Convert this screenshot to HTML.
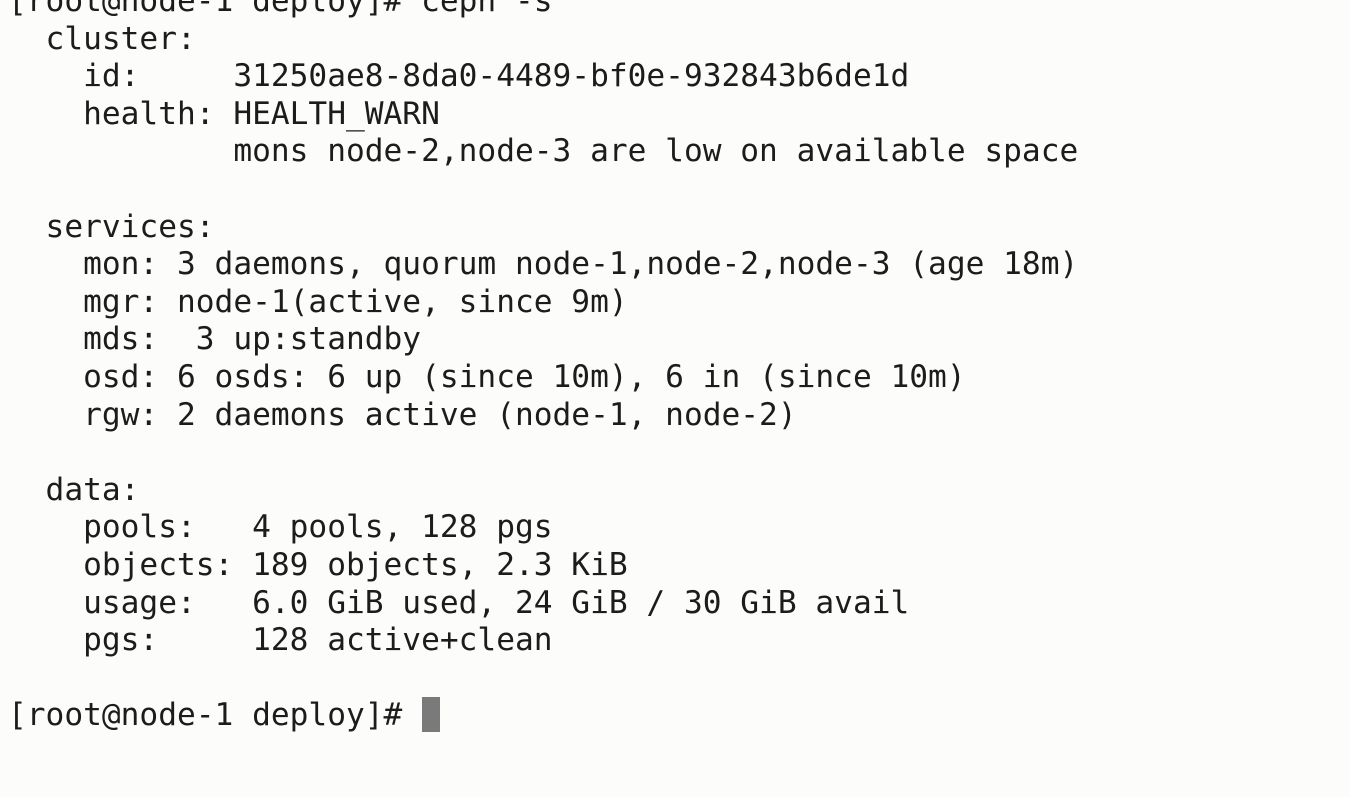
<!DOCTYPE html>
<html><head><meta charset="utf-8"><style>
html,body{margin:0;padding:0;background:#fcfcfa;width:1350px;height:797px;overflow:hidden}
pre{position:absolute;left:8px;top:-17px;margin:0;font-family:"DejaVu Sans Mono","Liberation Mono",monospace;font-size:31.2px;line-height:37.6px;color:#1c1c1c;letter-spacing:0}
.cur{position:absolute;left:422px;top:697px;width:18px;height:35px;background:#7a7a7a}
</style></head><body>
<pre>[root@node-1 deploy]# ceph -s
  cluster:
    id:     31250ae8-8da0-4489-bf0e-932843b6de1d
    health: HEALTH_WARN
            mons node-2,node-3 are low on available space

  services:
    mon: 3 daemons, quorum node-1,node-2,node-3 (age 18m)
    mgr: node-1(active, since 9m)
    mds:  3 up:standby
    osd: 6 osds: 6 up (since 10m), 6 in (since 10m)
    rgw: 2 daemons active (node-1, node-2)

  data:
    pools:   4 pools, 128 pgs
    objects: 189 objects, 2.3 KiB
    usage:   6.0 GiB used, 24 GiB / 30 GiB avail
    pgs:     128 active+clean

[root@node-1 deploy]# </pre>
<div class="cur"></div>
</body></html>
